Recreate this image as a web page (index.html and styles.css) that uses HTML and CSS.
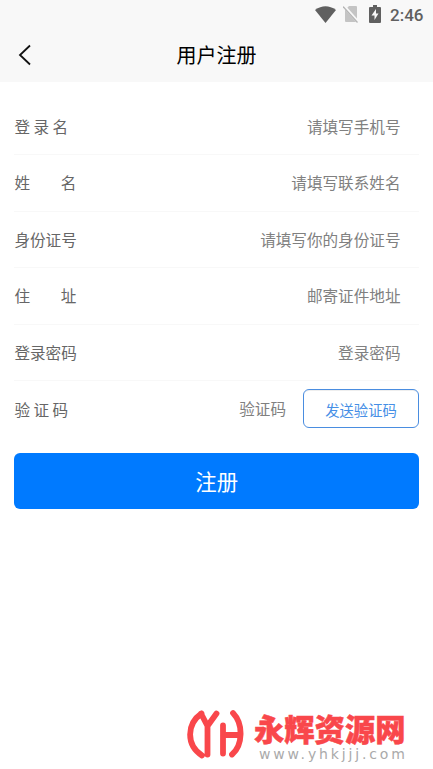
FILE: index.html
```html
<!DOCTYPE html>
<html lang="zh-CN">
<head>
<meta charset="utf-8">
<meta name="viewport" content="width=device-width, initial-scale=1">
<title>用户注册</title>
<link rel="stylesheet" href="styles.css">
</head>
<body>
<header class="top">
  <div class="status">
    <svg class="wifi" width="21" height="17" viewBox="0 0 21 17"><path d="M0 4Q10.5-3.500 21 4L10.500 17Z"/></svg>
    <svg class="sim" width="16" height="18" viewBox="0 0 16 18"><path class="card" d="M6 1h7q1 0 1 1v14q0 1-1 1H3q-1 0-1-1V5Z"/><path class="gap" d="M0 0l16 18"/><path class="slash" d="M0 1.500l14.500 16"/></svg>
    <svg class="battery" width="12" height="18" viewBox="0 0 12 18"><path d="M4 0h4v2h3q1 0 1 1v14q0 1-1 1H1q-1 0-1-1V3q0-1 1-1h3Z"/><path class="bolt" d="M7 4L2.500 10.500H5.500V15L9.500 8.500H7Z"/></svg>
    <span class="time">2:46</span>
  </div>
  <nav class="bar">
    <svg class="back" width="14" height="22" viewBox="0 0 14 22"><path d="M12 1.500L2 11l10 9.500"/></svg>
    <h1>用户注册</h1>
  </nav>
</header>
<main>
  <div class="row"><span class="label">登 录 名</span><span class="value">请填写手机号</span></div>
  <div class="row"><span class="label wide"><i>姓</i><i>名</i></span><span class="value">请填写联系姓名</span></div>
  <div class="row"><span class="label">身份证号</span><span class="value">请填写你的身份证号</span></div>
  <div class="row"><span class="label wide"><i>住</i><i>址</i></span><span class="value">邮寄证件地址</span></div>
  <div class="row"><span class="label">登录密码</span><span class="value">登录密码</span></div>
  <div class="row code"><span class="label">验 证 码</span><span class="value">验证码</span><button class="send">发送验证码</button></div>
  <button class="submit">注册</button>
</main>
<footer class="brand">
  <svg class="logo" width="58" height="52" viewBox="0 0 58 52"><path d="M14.500 4.500C-.5 15-1 36 15 46.500M14 4.500L20.500 17M29.500 4.500L20.500 17V45.500M36 16.500V44.500M36 26H53M46 4C56.500 15 56 36 45 45.500"/></svg>
  <div class="brand-text"><span class="name">永辉资源网</span><span class="url">www.yhkjjj.com</span></div>
</footer>
</body>
</html>
```
FILE: styles.css
```css
* { box-sizing: border-box; }
body {
  margin: 0;
  height: 769px;
  display: flex;
  flex-direction: column;
  overflow: hidden;
  background: #fff;
  font-family: "Noto Sans CJK SC", sans-serif;
}
.top { height: 81.5px; background: #f8f8f8; }
.status {
  height: 28px;
  padding-right: 9.5px;
  display: flex;
  justify-content: flex-end;
  align-items: center;
  fill: #606060;
}
.sim { margin-left: 7px; }
.sim .card { fill: #c4c4c4; }
.sim .gap { stroke: #f8f8f8; stroke-width: 3; }
.sim .slash { stroke: #b5b5b5; stroke-width: 1.2; }
.battery { margin-left: 10px; }
.battery .bolt { fill: #f8f8f8; }
.time {
  margin: 2px 0 0 9px;
  font: 500 17px/28px Roboto, sans-serif;
  color: #606060;
}
.bar { height: 53px; display: grid; grid-template-columns: 60px 1fr 60px; }
.back { margin: 16px 0 0 18px; fill: none; stroke: #111; stroke-width: 1.8; }
h1 { margin: 0; text-align: center; font-size: 20px; font-weight: 400; line-height: 53px; color: #000; }
main { padding: 17px 14px 0 14.4px; }
.row {
  height: 56.5px;
  display: flex;
  align-items: center;
  justify-content: space-between;
  padding-right: 18.5px;
  border-bottom: 1px solid #f8f8f8;
  font-size: 15.6px;
  line-height: 24px;
}
.label, .value { margin-top: -1px; }
.label { color: #666; white-space: pre; }
.wide { width: 62px; display: flex; justify-content: space-between; }
.wide i { font-style: normal; }
.value { color: #808080; }
.code { border: 0; padding-right: 0; }
.code .value { margin-left: auto; margin-top: -2px; }
.send {
  width: 116px;
  height: 39px;
  margin: -2px 0 0 17px;
  padding: 3px 0 0;
  border: 1px solid #4a8de0;
  border-radius: 6px;
  background: #fff;
  box-shadow: inset 0 2px 0 -1px #eee;
  color: #468fe6;
  font: 14.3px/20px "Noto Sans CJK SC", sans-serif;
}
.submit {
  display: block;
  width: 100%;
  height: 55.5px;
  margin-top: 15.500px;
  padding: 0;
  border: 0;
  border-radius: 6px;
  background: #007aff;
  color: #fff;
  font: 21.4px/53px "Noto Sans CJK SC", sans-serif;
}
.brand { margin: auto 0 8px 187px; display: flex; }
.logo { flex: none; margin-top: -1px; fill: none; stroke: #f9474b; stroke-width: 5.8; stroke-linecap: round; stroke-linejoin: round; }
.brand-text { margin-left: 9px; display: flex; flex-direction: column; }
.name { font-size: 30.3px; font-weight: 900; line-height: 37px; height: 38px; color: #f9474b; -webkit-text-stroke: .5px #f9474b; white-space: nowrap; }
.url { font: 14px/13px "DejaVu Sans", sans-serif; letter-spacing: 2.85px; color: #aaa; padding-left: 5px; }
```
